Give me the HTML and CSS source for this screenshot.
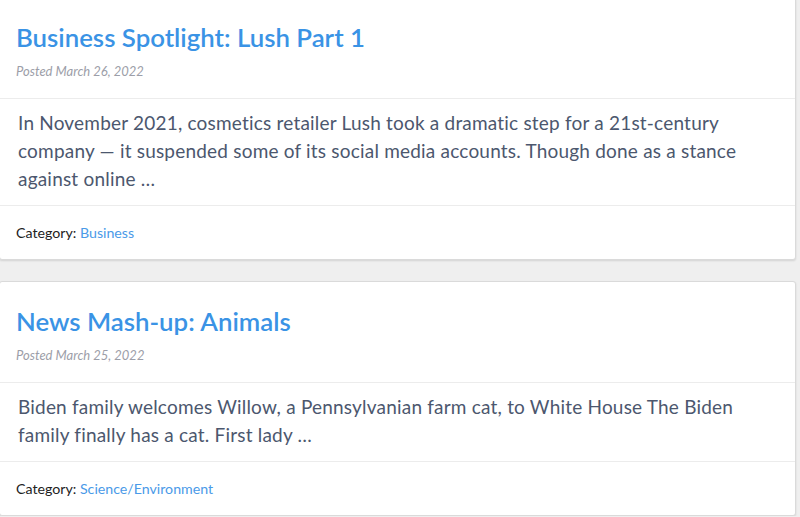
FILE: index.html
```html
<!DOCTYPE html>
<html lang="en">
<head>
<meta charset="UTF-8" />
<title>Posts</title>
<link rel="stylesheet" href="styles.css">
</head>
<body>
<div class="posts">

  <div class="card">
    <div class="card-head">
      <h2 class="title"><a href="#">Business Spotlight: Lush Part 1</a></h2>
      <div class="posted">Posted March 26, 2022</div>
    </div>
    <div class="card-body">
      <p>In November 2021, cosmetics retailer Lush took a dramatic step for a 21st-century company — it suspended some of its social media accounts. Though done as a stance against online …</p>
    </div>
    <div class="card-foot">Category: <a href="#">Business</a></div>
  </div>

  <div class="card">
    <div class="card-head">
      <h2 class="title"><a href="#">News Mash-up: Animals</a></h2>
      <div class="posted">Posted March 25, 2022</div>
    </div>
    <div class="card-body">
      <p>Biden family welcomes Willow, a Pennsylvanian farm cat, to White House The Biden family finally has a cat. First lady …</p>
    </div>
    <div class="card-foot">Category: <a href="#">Science/Environment</a></div>
  </div>

</div>
</body>
</html>
```

FILE: styles.css
```css
body { margin: 0; background: #efefef; font-family: Lato, "Noto Sans", sans-serif; }
.posts { margin: -3px 4px 0 -1px; display: flex; flex-direction: column; gap: 21px; }
.card { background: #fff; border: 1px solid #dadada; border-radius: 3px; box-shadow: 0 1px 2px rgba(0,0,0,0.12); }
.card-head { padding: 24px 16px 19px; border-bottom: 1px solid #ececec; }
.title { margin: 0; font-size: 25.8px; line-height: 30px; font-weight: 600; }
.title a { color: #3a93e5; text-decoration: none; }
.posted { margin-top: 11px; font-size: 13px; line-height: 16px; font-style: italic; color: #9c9ea8; }
.card-body { padding: 10px 18px 12px 18px; border-bottom: 1px solid #ececec; }
.card-body p { margin: 0; font-size: 19px; line-height: 28px; letter-spacing: 0.2px; color: #4c576e; }
.card-foot { padding: 17px 16px; font-size: 14.2px; line-height: 19px; color: #222; }
.card-foot a { color: #4a9ae8; text-decoration: none; }
```
